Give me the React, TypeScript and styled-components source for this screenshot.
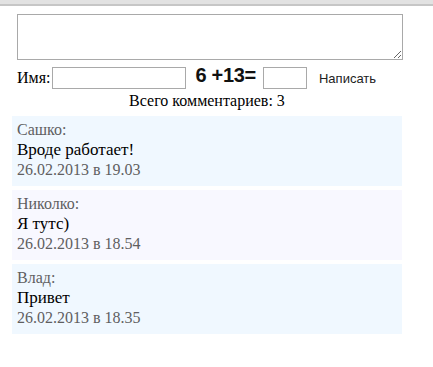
import styled, { createGlobalStyle } from 'styled-components'

const GlobalStyle = createGlobalStyle`
  body {
    margin: 0;
    background: #fff;
    font-family: "Liberation Serif", "Times New Roman", serif;
    font-size: 16px;
    color: #000;
  }
`

const TopBar = styled.div`
  height: 4px;
  background: #e2e2e2;
  border-bottom: 2px solid #c6c6c6;
`

const Page = styled.div`
  width: 390px;
  margin-left: 12px;
  padding-top: 8px;
`

const Form = styled.form`
  padding-left: 5px;
  margin: 0;
`

const TextArea = styled.textarea`
  display: block;
  box-sizing: border-box;
  width: 386px;
  height: 46px;
  border: 1px solid #a9a9a9;
  margin: 0;
  resize: both;
`

const FormRow = styled.div`
  display: flex;
  align-items: center;
  height: 22px;
  margin-top: 7px;
  line-height: 22px;
`

const Label = styled.span`
  margin-right: 2px;
`

const Field = styled.input<{ w: number }>`
  box-sizing: border-box;
  width: ${p => p.w}px;
  height: 22px;
  border: 1px solid #a9a9a9;
  padding: 0 2px;
  margin: 0;
`

const Captcha = styled.span`
  font-family: "Liberation Sans", Arial, sans-serif;
  font-weight: bold;
  font-size: 20px;
  letter-spacing: -0.3px;
  color: #111;
  margin: 0 7px 0 9px;
  position: relative;
  top: -3px;
  white-space: pre;
`

const SubmitButton = styled.button`
  border: 0;
  background: transparent;
  font-family: "Liberation Sans", Arial, sans-serif;
  font-size: 13px;
  color: #222;
  padding: 0;
  margin-left: 12px;
  cursor: pointer;
`

const Total = styled.div`
  text-align: center;
  line-height: 20px;
  margin-top: 2px;
`

const CommentList = styled.div`
  display: flex;
  flex-direction: column;
  gap: 4px;
  margin-top: 5px;
`

const Comment = styled.div<{ tint: string }>`
  background: ${p => p.tint};
  padding: 4px 5px 6px;
  line-height: 20px;
`

const Muted = styled.div`
  color: #5f5f5f;
`

const Body = styled.div`
  color: #000;
  font-size: 17px;
`

const comments = [
  { name: 'Сашко', text: 'Вроде работает!', date: '26.02.2013 в 19.03', tint: '#f0f8ff' },
  { name: 'Николко', text: 'Я тутс)', date: '26.02.2013 в 18.54', tint: '#f8f8ff' },
  { name: 'Влад', text: 'Привет', date: '26.02.2013 в 18.35', tint: '#f0f8ff' },
]

export default function App() {
  return (
    <>
      <GlobalStyle />
      <TopBar />
      <Page>
        <Form onSubmit={e => e.preventDefault()}>
          <TextArea />
          <FormRow>
            <Label>Имя:</Label>
            <Field w={134} />
            <Captcha>6 +13=</Captcha>
            <Field w={44} />
            <SubmitButton type='submit'>Написать</SubmitButton>
          </FormRow>
        </Form>
        <Total>Всего комментариев: 3</Total>
        <CommentList>
          {comments.map(c => (
            <Comment key={c.name} tint={c.tint}>
              <Muted>{c.name}:</Muted>
              <Body>{c.text}</Body>
              <Muted>{c.date}</Muted>
            </Comment>
          ))}
        </CommentList>
      </Page>
    </>
  )
}
